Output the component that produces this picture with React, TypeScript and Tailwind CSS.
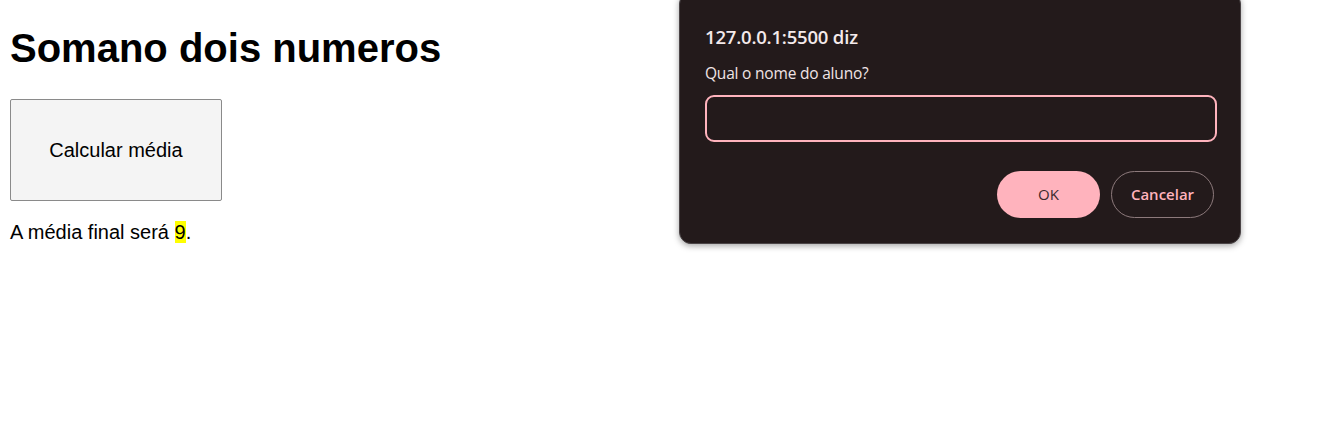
import React from "react";

export default function App() {
  return (
    <div className="relative w-[1343px] h-[438px] bg-white overflow-hidden">
      <div className="px-[10px] pt-[25px] text-black" style={{ fontFamily: '"Liberation Sans", Arial, sans-serif' }}>
        <h1 className="text-[40px] font-bold leading-[46px] m-0">Somano dois numeros</h1>
        <button className="mt-[28px] w-[212px] h-[102px] bg-[#f4f4f4] border border-[#8a8a8a] rounded-[2px] text-[20px] text-black">
          Calcular média
        </button>
        <p className="mt-[20px] text-[20px] leading-[23px]">
          A média final será <span className="bg-[#ffff00]">9</span>.
        </p>
      </div>

      <div
        className="absolute left-[679px] top-[-8px] w-[562px] h-[252px] bg-[#231a1b] rounded-[12px] border border-[#4a4446] shadow-[0_2px_6px_rgba(0,0,0,0.35)] px-[25px] pt-[32px]"
        style={{ fontFamily: '"Open Sans", "Noto Sans", sans-serif' }}
      >
        <div className="text-[18.5px] font-semibold leading-[24px] text-[#f4eaeb] tracking-[-0.2px]">127.0.0.1:5500 diz</div>
        <div className="mt-[14px] text-[15.5px] leading-[20px] text-[#f0e4e5] tracking-[-0.2px]">Qual o nome do aluno?</div>
        <div className="mt-[12px] h-[47px] w-[512px] rounded-[9px] border-2 border-[#ffb3bd]" />
        <div className="mt-[29px] flex justify-end gap-[11px] pr-[1px]">
          <button className="w-[103px] h-[47px] rounded-full bg-[#ffb3bd] text-[#3b2a2d] text-[15px] font-medium">OK</button>
          <button className="w-[103px] h-[47px] rounded-full border border-[#8d7a7c] text-[#ffb3bd] text-[15px] font-semibold">Cancelar</button>
        </div>
      </div>
    </div>
  );
}
